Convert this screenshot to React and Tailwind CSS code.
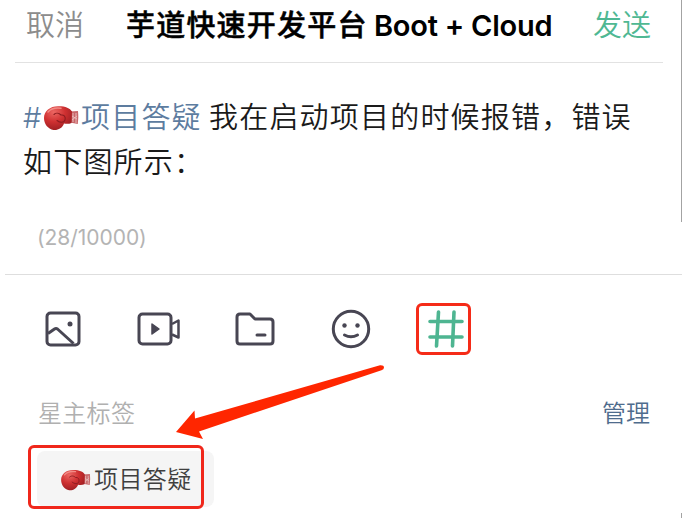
import React from "react";

function Glove({ className }) {
  return (
    <svg viewBox="0 0 36 26" className={className} fill="none" aria-hidden="true">
      <defs>
        <radialGradient id="leather" cx="0.35" cy="0.25" r="0.8">
          <stop offset="0" stopColor="#ec6763" />
          <stop offset="0.5" stopColor="#cf3031" />
          <stop offset="1" stopColor="#9a1d21" />
        </radialGradient>
      </defs>
      <path d="M27 6.5 L35 6 Q35.8 12 34.8 19 L27 17.5Z" fill="#c8676a" />
      <path d="M30 8v9M33 8v10M29 11l5 3M29 15l5-4" stroke="#e9b9b8" strokeWidth="1" />
      <path d="M1 13C1 6 7 1.200 15 1.200C22 1 27 3 29 6.500L28.500 18C26 19 23.500 19 21 18.500C19.500 23 15 25.500 10.500 25C5 24 1 19 1 13Z" fill="url(#leather)" />
      <path d="M11 9.500C13 7.500 16 8 18 10C21 9.500 23 12 22 15C21 18 17 18 14 15.500" stroke="#8d1c20" strokeWidth="1.100" strokeLinecap="round" />
      <path d="M5 7C8 3.500 13 2.500 18 3.200" stroke="#f28c86" strokeWidth="1.500" strokeLinecap="round" />
    </svg>
  );
}

function Header() {
  return (
    <header className="ml-[15px] flex h-[63px] w-[648px] items-start border-b border-[#e2e2e2] pt-1 leading-[44px] whitespace-nowrap">
      <span className="ml-[11px] w-[100px] text-[29px] font-[350] text-[#8c8c8c]">取消</span>
      <h1 className="flex w-[467px] shrink-0 text-[29px] text-black">
        <span className="w-[248px] font-medium tracking-[1.2px] [-webkit-text-stroke:0.5px_black]">芋道快速开发平台</span>
        <span className="font-semibold tracking-[-0.25px]">Boot + Cloud</span>
      </h1>
      <span className="text-[29px] font-[350] text-[#4fb893]">发送</span>
    </header>
  );
}

function Editor() {
  return (
    <section className="flex h-[212px] flex-col">
      <div className="pt-[32px] pl-[23px] text-[29px] leading-[45px] font-[350] tracking-[1.2px] text-[#1a1a1a]">
        <div className="flex h-[45px] items-center">
          <span className="flex w-[186px] items-center text-[#5d7c9f]">
            <span className="w-[20px]">#</span>
            <Glove className="mr-[2px] h-[26px] w-[36px]" />
            <span>项目答疑</span>
          </span>
          <span>我在启动项目的时候报错，</span>
          <span>错误</span>
        </div>
        <div>如下图所示：</div>
      </div>
      <div className="mt-[38px] pl-[37px] text-[21px] leading-[30px] tracking-[-0.05px] text-[#b4b4b4]">(28/10000)</div>
      <div className="mt-auto ml-[5px] h-px bg-[#dedede]" />
    </section>
  );
}

function Toolbar() {
  return (
    <nav className="flex h-[108px] items-center pl-[45px] text-[#484653]">
      <svg className="mr-[56px] h-[36px] w-[36px]" viewBox="0 0 36 36" fill="none" stroke="currentColor" strokeWidth="3" strokeLinejoin="round">
        <rect x="2" y="2" width="32" height="32" rx="3.500" />
        <path d="M3 22.500L9.500 18Q11 17 12.500 18L28.500 32.500" />
        <circle cx="25" cy="13" r="2.500" fill="currentColor" stroke="none" />
      </svg>
      <svg className="mr-[55px] h-[34px] w-[43px]" viewBox="0 0 43 34" fill="none" stroke="currentColor" strokeWidth="3" strokeLinejoin="round">
        <rect x="2" y="2" width="32" height="30" rx="3.500" />
        <path d="M35 12L41.500 8.500V25.500L35 22.500" strokeWidth="2.500" />
        <path d="M15 12L22 17L15 22Z" fill="currentColor" strokeWidth="1.500" />
      </svg>
      <svg className="mr-[56px] h-[34px] w-[40px]" viewBox="0 0 40 34" fill="none" stroke="currentColor" strokeWidth="3" strokeLinejoin="round" strokeLinecap="round">
        <path d="M5 2H15L20 7H35Q38 7 38 10V29Q38 32 35 32H5Q2 32 2 29V5Q2 2 5 2Z" />
        <path d="M22 23H30" />
      </svg>
      <svg className="mr-[45px] h-[40px] w-[40px]" viewBox="0 0 40 40" fill="none" stroke="currentColor" strokeWidth="3" strokeLinecap="round">
        <circle cx="20" cy="20" r="17.700" />
        <circle cx="13.500" cy="16.500" r="2.200" fill="currentColor" stroke="none" />
        <circle cx="26.500" cy="16.500" r="2.200" fill="currentColor" stroke="none" />
        <path d="M13.500 26Q20 29.500 26.500 26" />
      </svg>
      <div className="flex h-[52px] w-[55px] items-center justify-center rounded-[6px] border-[3px] border-[#f52b18] pl-1">
        <svg className="h-[38px] w-[36px] shrink-0" viewBox="0 0 36 38" fill="none" stroke="#4eb591" strokeWidth="3.600" strokeLinecap="round">
          <path d="M10.500 2L8.500 36M26 2L24.500 36M2 11.500H34M2 27H34" />
        </svg>
      </div>
    </nav>
  );
}

function Tags() {
  return (
    <section className="flex flex-col pt-[13px] text-[24px] leading-[36px] font-[350]">
      <div className="flex justify-between pr-[32px] pl-[38px]">
        <span className="tracking-[0.3px] text-[#b0b0b0]">星主标签</span>
        <span className="text-[#4f6c8d]">管理</span>
      </div>
      <div className="mt-[19px] ml-[37px] flex h-[56px] w-[177px] items-center rounded-lg bg-[#f5f5f5] pt-px pl-[23px] text-[#3f3f3f]">
        <Glove className="mr-[3px] h-[22px] w-[31px]" />
        <span className="tracking-[0.4px]">项目答疑</span>
      </div>
    </section>
  );
}

export default function App() {
  return (
    <main className="relative h-[518px] w-[682px] overflow-hidden bg-white font-[Inter,'Noto_Sans_CJK_SC',sans-serif]">
      <Header />
      <Editor />
      <Toolbar />
      <Tags />
      <div className="absolute top-0 right-0 h-[222px] w-px bg-[#a3a3a3]" />
      <div className="absolute right-0 bottom-0 h-[5px] w-px bg-[#a3a3a3]" />
      <div className="absolute top-[445px] left-[28px] h-[64px] w-[176px] rounded-[6px] border-[3px] border-[#f0271b]" />
      <svg className="absolute top-[360px] left-[170px] h-[85px] w-[220px]" viewBox="170 360 220 85" aria-hidden="true">
        <path d="M176 432L194.500 410.500L195 418.500L380 365.200Q384 365 384 367.500Q384 369.500 381.500 370.200L199 431.500L203 439Z" fill="#ff2600" />
      </svg>
    </main>
  );
}
